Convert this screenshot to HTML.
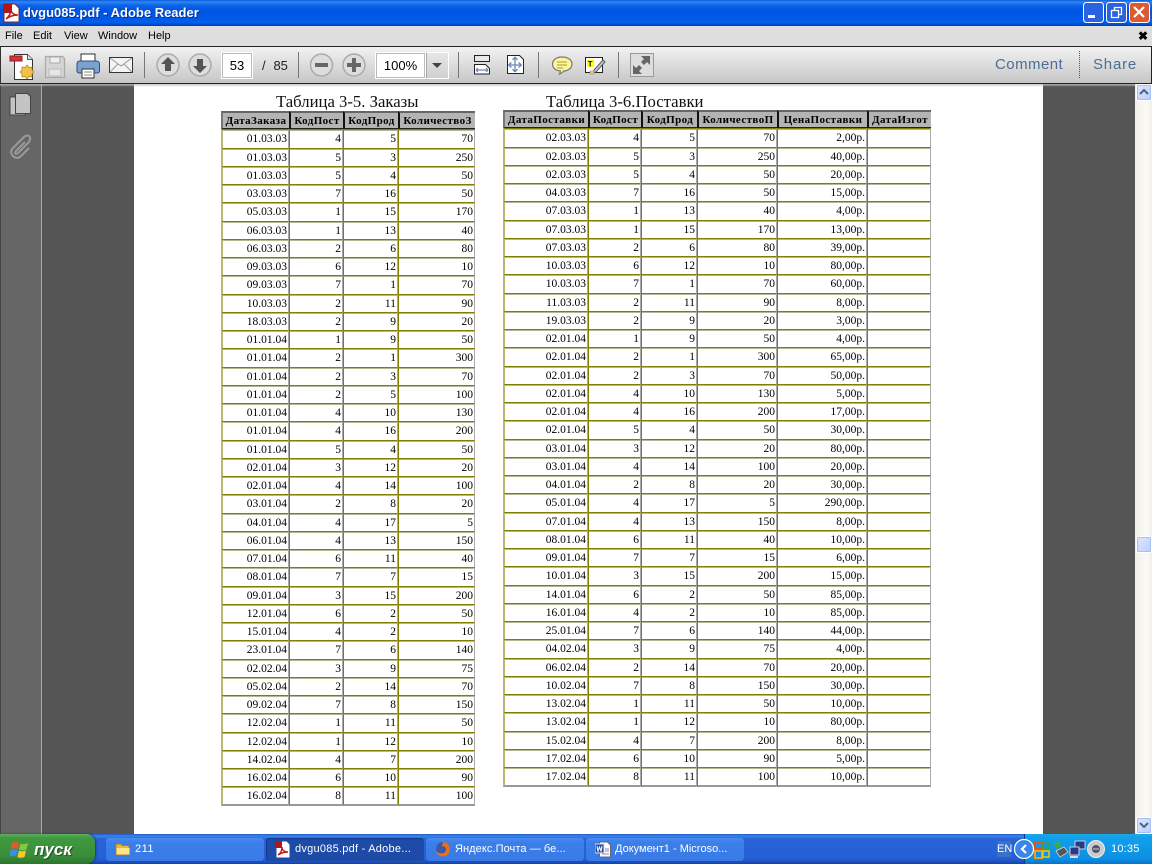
<!DOCTYPE html>
<html><head><meta charset="utf-8"><style>
html,body{margin:0;padding:0;width:1152px;height:864px;overflow:hidden;background:#555;font-family:"Liberation Sans","Noto Sans CJK SC",sans-serif}
.a{position:absolute}
#title{left:0;top:0;width:1152px;height:26px;background:linear-gradient(#0a5ce0 0,#2f86f0 2px,#0f66e8 5px,#0055e2 10px,#0058e6 18px,#0061ee 22px,#0048c8 25px,#0038a8 26px)}
#tt{left:23px;top:5px;color:#fff;font:bold 13px "Liberation Sans",sans-serif;letter-spacing:0;text-shadow:1px 1px 0 #0030a0;white-space:nowrap}
#menu{left:0;top:26px;width:1152px;height:20px;background:#dedede;font-size:11px;color:#000}
#menu span{position:absolute;top:3px}
#tb{left:0;top:46px;width:1150px;height:36px;background:linear-gradient(#f2f2f2,#c6c6c6);border:1px solid #222;border-left:1px solid #333;border-radius:1px}
#shade{left:0;top:84px;width:1135px;height:3px;background:linear-gradient(rgba(190,190,190,.9),rgba(190,190,190,0))}
.inp{position:absolute;background:#fff;border:1px solid #fff;box-shadow:0 0 0 1px #bbb inset;font-size:13px;color:#000}
#side{left:0;top:84px;width:41px;height:750px;background:#666;border-right:1px solid #aaa;box-shadow:inset 1px 0 0 #444}
#page{left:134px;top:84px;width:909px;height:750px;background:#fff}
#sb{left:1135px;top:84px;width:17px;height:750px;background:linear-gradient(90deg,#f2f0e8,#fbfaf6 70%,#f0efe8)}
.sbb{position:absolute;left:1px;width:14px;height:15px;background:linear-gradient(135deg,#e0e8ff,#b9ccfb);border:1px solid #fff;border-radius:2px;box-shadow:0 0 0 1px #a8c0f0 inset}
.cap{position:absolute;font:16.7px/16px "Liberation Serif",serif;color:#111;white-space:nowrap}
table{position:absolute;border-collapse:separate;border-spacing:0;table-layout:fixed;font:11.5px "Liberation Serif",serif;color:#000}
td,th{padding:0 1px 0 0;overflow:hidden;white-space:nowrap;text-align:right;box-sizing:border-box;line-height:12px}
td{height:18px;border-top:1px solid #808000;border-left:1px solid #808000;border-right:1px solid #aaa;box-shadow:inset 0 1px 0 #b8b890}
tr:nth-child(4n+2) td{height:19px}
th{height:18px;background:#b4b4b4;font:bold 11px "Liberation Serif",serif;letter-spacing:.4px;text-align:center;padding:0;border-top:2px solid #666;border-left:2px solid #111;border-bottom:1px solid #222;color:#000}
tr:last-child td{height:20px;border-bottom:2px solid #999}
td:first-child{border-left:2px solid #b8b870}
th:first-child{border-left:2px solid #777}
#task{left:0;top:834px;width:1152px;height:30px;background:linear-gradient(#1f5cc8 0,#3c82ec 2px,#2a63d6 5px,#2560d8 24px,#1c4fc0 28px,#16409f 30px)}
.tbtn{position:absolute;top:838px;height:23px;width:158px;background:linear-gradient(#4a8cf0,#3b7fe8 4px,#3a7ae6);border-radius:3px;color:#fff;font-size:11px;line-height:23px;white-space:nowrap;box-shadow:0 1px 0 #1d4fb8}
.act{background:#1e4aa8;box-shadow:inset 1px 1px 1px #153a86}
#start{left:0;top:834px;width:95px;height:30px;background:linear-gradient(#5fae5f,#3f9a3f 4px,#3a8d3a 22px,#2d742d);border-radius:0 9px 9px 0;box-shadow:1px 0 2px #163a78}
#st{left:34px;top:840px;color:#fff;font:italic bold 17px "Liberation Sans",sans-serif;text-shadow:1px 1px 1px #204a20}
#tray{left:1024px;top:834px;width:128px;height:30px;background:linear-gradient(#1aa8e8 0,#12a0ea 3px,#0c8fe4 25px,#0a72c8);border-left:1px solid #083a8a}
</style></head><body>
<div class="a" id="title"></div>
<svg class="a" style="left:2px;top:3px" width="20" height="20" viewBox="0 0 20 20"><path d="M2 1h11l4 4v14H2z" fill="#fff" stroke="#8a2020"/><rect x="1" y="1" width="9" height="9" fill="#b01818"/><path d="M4 16c3-2 5-6 5-10 0 4 3 6 7 6-4 0-8 1-12 4z" fill="none" stroke="#c01818" stroke-width="1.6"/></svg>
<div class="a" id="tt">dvgu085.pdf - Adobe Reader</div>
<svg class="a" style="left:1083px;top:2px" width="69" height="22" viewBox="0 0 69 22">
<rect x="0.5" y="0.5" width="20" height="20" rx="3" fill="#2a62e0" stroke="#fff"/><rect x="5" y="13" width="7" height="3" fill="#fff"/>
<rect x="23.5" y="0.5" width="20" height="20" rx="3" fill="#2a62e0" stroke="#fff"/><path d="M28.5 8.5h7v7h-7zM31.5 8V5.5h7v7H36" fill="none" stroke="#fff" stroke-width="1.3"/>
<rect x="46.5" y="0.5" width="20" height="20" rx="3" fill="#dc5a30" stroke="#fff"/><path d="M51 5l10 10M61 5L51 15" stroke="#fff" stroke-width="2.2"/></svg>
<div class="a" id="menu"><span style="left:5px;top:3.500px">File</span><span style="left:33px;top:3.500px">Edit</span><span style="left:64px;top:3.500px">View</span><span style="left:98px;top:3.500px">Window</span><span style="left:148px;top:3.500px">Help</span><span style="left:1138px;top:3px;font-weight:bold;font-size:12px">✖</span></div>
<div class="a" id="tb"></div>
<svg class="a" style="left:0;top:46px" width="680" height="38" viewBox="0 46 680 38">
<path d="M14.5 54.5h13l5 5v20h-18z" fill="#fff" stroke="#333"/><path d="M27.5 54.5v5h5" fill="#ddd" stroke="#555"/><rect x="10" y="56" width="12" height="5" fill="#d8303a" stroke="#8a2020"/><path d="M27 65l2 2.5 3-.5 0 3 2 2-2 2 0 3-3-.5-2 2.500-2-2.500-3 .5 0-3-2-2 2-2 0-3 3 .5z" fill="#f0c24a" stroke="#a88020" stroke-width=".7"/>
<path d="M45.500 56.500h17l2 2v19h-19z" fill="#d6d6d6" stroke="#aaa" stroke-width="1.3"/><rect x="50" y="57" width="10" height="6" fill="#eee" stroke="#aaa"/><rect x="49" y="69" width="12" height="7" fill="#e6e6e6" stroke="#bbb"/>
<rect x="81" y="54" width="14" height="8" fill="#fff" stroke="#333"/><path d="M80 61h16c3 0 3.500 2 3.500 3v7c0 1-1 2-3 2H80c-2 0-3-1-3-2v-7c0-2 1-3 3-3z" fill="#7ba3cf" stroke="#2d4f78"/><rect x="82" y="69" width="12" height="9" fill="#fff" stroke="#333"/><path d="M84 72h8M84 75h8" stroke="#888"/>
<rect x="109.500" y="57.500" width="23" height="15" fill="#f4f4f4" stroke="#333"/><path d="M110 58l11 8 11-8M110 72l8-8M132 72l-8-8" fill="none" stroke="#999"/>
<rect x="144" y="52" width="1" height="26" fill="#777"/>
<g><circle cx="168" cy="65" r="11" fill="#ddd" stroke="#aaa" stroke-width="1.500"/><path d="M168 57l7 7h-4v7h-6v-7h-4z" fill="#555"/></g>
<g><circle cx="200" cy="65" r="11" fill="#ddd" stroke="#aaa" stroke-width="1.500"/><path d="M200 73l-7-7h4v-7h6v7h4z" fill="#555"/></g>
<rect x="298" y="52" width="1" height="26" fill="#777"/>
<g><circle cx="321.500" cy="65" r="11" fill="#ddd" stroke="#aaa" stroke-width="1.500"/><rect x="315" y="63" width="13" height="4" fill="#666"/></g>
<g><circle cx="354" cy="65" r="11" fill="#ddd" stroke="#aaa" stroke-width="1.500"/><path d="M352 58h4v5h5v4h-5v5h-4v-5h-5v-4h5z" fill="#666"/></g>
<rect x="458" y="52" width="1" height="26" fill="#777"/>
<path d="M474.500 55.500h15v6h-15z" fill="#e8e8e8" stroke="#222"/><path d="M474.500 64.500h11l4 4v5.500h-15z" fill="#fff" stroke="#222"/><path d="M476 70h12M476 70l2-2M476 70l2 2M488 70l-2-2M488 70l-2 2" stroke="#6a84b8" stroke-width="1.200" fill="none"/>
<path d="M507.500 55.500h12l4 4v14h-16z" fill="#fff" stroke="#222"/><path d="M515 57v15M508.500 65h13M515 57l-2.500 3M515 57l2.500 3M515 72l-2.500-3M515 72l2.500-3M508.500 65l3-2.500M508.500 65l3 2.500M521.500 65l-3-2.500M521.500 65l-3 2.500" stroke="#6a84b8" stroke-width="1.300" fill="none"/>
<rect x="538" y="52" width="1" height="26" fill="#777"/>
<path d="M562 57c6 0 10 3 10 7 0 4-4 7-8.500 7-1 2-2.500 2.500-4 3 .5-1 1-2 .8-3.200C556 71 552.500 68 552.500 64c0-4 4-7 9.500-7z" fill="#fbf59c" stroke="#777" stroke-width="1.200"/><path d="M557 62h10M557 65h10M557 68h6" stroke="#a89a40"/>
<rect x="585.500" y="57.500" width="17" height="15" fill="#fff" stroke="#222"/><rect x="587" y="60" width="7" height="7" fill="#ff0"/><text x="587.800" y="66.500" font-family="Liberation Mono" font-weight="bold" font-size="8" fill="#111">T</text><path d="M605 62l-9 10-3 1 1-3 9-10z" fill="#c8c8c8" stroke="#555"/><rect x="590" y="71" width="4" height="3" fill="#e8d050" stroke="#888" stroke-width=".5"/>
<rect x="618" y="52" width="1" height="26" fill="#777"/>
<rect x="630.500" y="53.500" width="23" height="23" fill="#ddd" stroke="#999"/><path d="M650 56l0 9-3-3-3 3-3-3 3-3-3-3zM633 74l0-9 3 3 3-3 3 3-3 3 3 3z" fill="#666"/>
</svg>
<div class="inp" style="left:221px;top:52px;width:30px;height:25px;line-height:25px;text-align:center">53</div>
<div class="a" style="left:262px;top:58px;font-size:13px;color:#222;word-spacing:-1px">/&nbsp;&nbsp; 85</div>
<div class="inp" style="left:375px;top:52px;width:49px;height:25px;line-height:25px;text-align:center">100%</div>
<div class="a" style="left:426px;top:52px;width:21px;height:25px;background:linear-gradient(#e6e6e6,#d0d0d0);border:1px solid #fff;border-left:1px solid #aaa"></div>
<div class="a" style="left:432px;top:63px;border:5px solid transparent;border-top:5px solid #444;border-bottom:0"></div>
<div class="a" style="left:995px;top:56px;font-size:15px;letter-spacing:.45px;color:#4f6c94">Comment</div>
<div class="a" style="left:1079px;top:51px;height:27px;border-left:1px dotted #555"></div>
<div class="a" style="left:1093px;top:56px;font-size:15px;letter-spacing:.8px;color:#4f6c94">Share</div>
<div class="a" id="side"></div>
<svg class="a" style="left:7px;top:92px" width="28" height="72" viewBox="0 0 28 72">
<rect x="3" y="5" width="15" height="18" fill="#c4c4c4" stroke="#444"/><path d="M8.500 1.500h12l3 3v17h-15z" fill="#c4c4c4" stroke="#444"/>
<path d="M6 64c-3-3-2-6 0-8l11-11c3-3 7-1 6 2 0 2-1 3-2 4l-10 10c-2 2-4 0-2-2l9-9M6 64c3 3 6 2 8 0l8-8" fill="none" stroke="#9a9a9a" stroke-width="2"/></svg>
<div class="a" id="page"></div>
<div class="cap" style="left:276px;top:94px">Таблица 3-5. Заказы</div>
<div class="cap" style="left:546px;top:94px">Таблица 3-6.Поставки</div>
<table style="left:221px;top:111px;width:254px"><colgroup><col style="width:68px"><col style="width:54px"><col style="width:55px"><col style="width:77px"></colgroup>
<tr><th>ДатаЗаказа</th><th>КодПост</th><th>КодПрод</th><th>КоличествоЗ</th></tr>
<tr><td>01.03.03</td><td>4</td><td>5</td><td>70</td></tr>
<tr><td>01.03.03</td><td>5</td><td>3</td><td>250</td></tr>
<tr><td>01.03.03</td><td>5</td><td>4</td><td>50</td></tr>
<tr><td>03.03.03</td><td>7</td><td>16</td><td>50</td></tr>
<tr><td>05.03.03</td><td>1</td><td>15</td><td>170</td></tr>
<tr><td>06.03.03</td><td>1</td><td>13</td><td>40</td></tr>
<tr><td>06.03.03</td><td>2</td><td>6</td><td>80</td></tr>
<tr><td>09.03.03</td><td>6</td><td>12</td><td>10</td></tr>
<tr><td>09.03.03</td><td>7</td><td>1</td><td>70</td></tr>
<tr><td>10.03.03</td><td>2</td><td>11</td><td>90</td></tr>
<tr><td>18.03.03</td><td>2</td><td>9</td><td>20</td></tr>
<tr><td>01.01.04</td><td>1</td><td>9</td><td>50</td></tr>
<tr><td>01.01.04</td><td>2</td><td>1</td><td>300</td></tr>
<tr><td>01.01.04</td><td>2</td><td>3</td><td>70</td></tr>
<tr><td>01.01.04</td><td>2</td><td>5</td><td>100</td></tr>
<tr><td>01.01.04</td><td>4</td><td>10</td><td>130</td></tr>
<tr><td>01.01.04</td><td>4</td><td>16</td><td>200</td></tr>
<tr><td>01.01.04</td><td>5</td><td>4</td><td>50</td></tr>
<tr><td>02.01.04</td><td>3</td><td>12</td><td>20</td></tr>
<tr><td>02.01.04</td><td>4</td><td>14</td><td>100</td></tr>
<tr><td>03.01.04</td><td>2</td><td>8</td><td>20</td></tr>
<tr><td>04.01.04</td><td>4</td><td>17</td><td>5</td></tr>
<tr><td>06.01.04</td><td>4</td><td>13</td><td>150</td></tr>
<tr><td>07.01.04</td><td>6</td><td>11</td><td>40</td></tr>
<tr><td>08.01.04</td><td>7</td><td>7</td><td>15</td></tr>
<tr><td>09.01.04</td><td>3</td><td>15</td><td>200</td></tr>
<tr><td>12.01.04</td><td>6</td><td>2</td><td>50</td></tr>
<tr><td>15.01.04</td><td>4</td><td>2</td><td>10</td></tr>
<tr><td>23.01.04</td><td>7</td><td>6</td><td>140</td></tr>
<tr><td>02.02.04</td><td>3</td><td>9</td><td>75</td></tr>
<tr><td>05.02.04</td><td>2</td><td>14</td><td>70</td></tr>
<tr><td>09.02.04</td><td>7</td><td>8</td><td>150</td></tr>
<tr><td>12.02.04</td><td>1</td><td>11</td><td>50</td></tr>
<tr><td>12.02.04</td><td>1</td><td>12</td><td>10</td></tr>
<tr><td>14.02.04</td><td>4</td><td>7</td><td>200</td></tr>
<tr><td>16.02.04</td><td>6</td><td>10</td><td>90</td></tr>
<tr><td>16.02.04</td><td>8</td><td>11</td><td>100</td></tr>
</table>
<table style="left:503px;top:110px;width:428px"><colgroup><col style="width:85px"><col style="width:53px"><col style="width:56px"><col style="width:80px"><col style="width:90px"><col style="width:64px"></colgroup>
<tr><th>ДатаПоставки</th><th>КодПост</th><th>КодПрод</th><th>КоличествоП</th><th>ЦенаПоставки</th><th>ДатаИзгот</th></tr>
<tr><td>02.03.03</td><td>4</td><td>5</td><td>70</td><td>2,00р.</td><td></td></tr>
<tr><td>02.03.03</td><td>5</td><td>3</td><td>250</td><td>40,00р.</td><td></td></tr>
<tr><td>02.03.03</td><td>5</td><td>4</td><td>50</td><td>20,00р.</td><td></td></tr>
<tr><td>04.03.03</td><td>7</td><td>16</td><td>50</td><td>15,00р.</td><td></td></tr>
<tr><td>07.03.03</td><td>1</td><td>13</td><td>40</td><td>4,00р.</td><td></td></tr>
<tr><td>07.03.03</td><td>1</td><td>15</td><td>170</td><td>13,00р.</td><td></td></tr>
<tr><td>07.03.03</td><td>2</td><td>6</td><td>80</td><td>39,00р.</td><td></td></tr>
<tr><td>10.03.03</td><td>6</td><td>12</td><td>10</td><td>80,00р.</td><td></td></tr>
<tr><td>10.03.03</td><td>7</td><td>1</td><td>70</td><td>60,00р.</td><td></td></tr>
<tr><td>11.03.03</td><td>2</td><td>11</td><td>90</td><td>8,00р.</td><td></td></tr>
<tr><td>19.03.03</td><td>2</td><td>9</td><td>20</td><td>3,00р.</td><td></td></tr>
<tr><td>02.01.04</td><td>1</td><td>9</td><td>50</td><td>4,00р.</td><td></td></tr>
<tr><td>02.01.04</td><td>2</td><td>1</td><td>300</td><td>65,00р.</td><td></td></tr>
<tr><td>02.01.04</td><td>2</td><td>3</td><td>70</td><td>50,00р.</td><td></td></tr>
<tr><td>02.01.04</td><td>4</td><td>10</td><td>130</td><td>5,00р.</td><td></td></tr>
<tr><td>02.01.04</td><td>4</td><td>16</td><td>200</td><td>17,00р.</td><td></td></tr>
<tr><td>02.01.04</td><td>5</td><td>4</td><td>50</td><td>30,00р.</td><td></td></tr>
<tr><td>03.01.04</td><td>3</td><td>12</td><td>20</td><td>80,00р.</td><td></td></tr>
<tr><td>03.01.04</td><td>4</td><td>14</td><td>100</td><td>20,00р.</td><td></td></tr>
<tr><td>04.01.04</td><td>2</td><td>8</td><td>20</td><td>30,00р.</td><td></td></tr>
<tr><td>05.01.04</td><td>4</td><td>17</td><td>5</td><td>290,00р.</td><td></td></tr>
<tr><td>07.01.04</td><td>4</td><td>13</td><td>150</td><td>8,00р.</td><td></td></tr>
<tr><td>08.01.04</td><td>6</td><td>11</td><td>40</td><td>10,00р.</td><td></td></tr>
<tr><td>09.01.04</td><td>7</td><td>7</td><td>15</td><td>6,00р.</td><td></td></tr>
<tr><td>10.01.04</td><td>3</td><td>15</td><td>200</td><td>15,00р.</td><td></td></tr>
<tr><td>14.01.04</td><td>6</td><td>2</td><td>50</td><td>85,00р.</td><td></td></tr>
<tr><td>16.01.04</td><td>4</td><td>2</td><td>10</td><td>85,00р.</td><td></td></tr>
<tr><td>25.01.04</td><td>7</td><td>6</td><td>140</td><td>44,00р.</td><td></td></tr>
<tr><td>04.02.04</td><td>3</td><td>9</td><td>75</td><td>4,00р.</td><td></td></tr>
<tr><td>06.02.04</td><td>2</td><td>14</td><td>70</td><td>20,00р.</td><td></td></tr>
<tr><td>10.02.04</td><td>7</td><td>8</td><td>150</td><td>30,00р.</td><td></td></tr>
<tr><td>13.02.04</td><td>1</td><td>11</td><td>50</td><td>10,00р.</td><td></td></tr>
<tr><td>13.02.04</td><td>1</td><td>12</td><td>10</td><td>80,00р.</td><td></td></tr>
<tr><td>15.02.04</td><td>4</td><td>7</td><td>200</td><td>8,00р.</td><td></td></tr>
<tr><td>17.02.04</td><td>6</td><td>10</td><td>90</td><td>5,00р.</td><td></td></tr>
<tr><td>17.02.04</td><td>8</td><td>11</td><td>100</td><td>10,00р.</td><td></td></tr>
</table>
<div class="a" id="shade"></div>
<div class="a" id="sb">
<div class="sbb" style="top:0"><svg width="14" height="15"><path d="M3 9l4-4 4 4" fill="none" stroke="#4d6185" stroke-width="2"/></svg></div>
<div class="sbb" style="top:452px"></div>
<div class="sbb" style="top:733px"><svg width="14" height="15"><path d="M3 5l4 4 4-4" fill="none" stroke="#4d6185" stroke-width="2"/></svg></div>
</div>
<div class="a" id="task"></div>
<div class="a" id="start"></div>
<svg class="a" style="left:10px;top:840px" width="20" height="19" viewBox="0 0 20 19"><path d="M2 3c3-1.500 5-1 7 0l-1.500 6c-2-1-4-1-7 0z" fill="#e8562a"/><path d="M10.500 3.500c2 1 4.500 1 7.500-.5l-1.500 6.500c-3 1-5 1-7.500 0z" fill="#8cc63f"/><path d="M0.500 10c3-1 5-1 7 0L6 16.500c-2-1-4-1-7 0z" fill="#3a8ee8"/><path d="M9 10.500c2 1 4 1 7 0l-1.500 6.500c-3 1-5 1-7 0z" fill="#f8c82c"/></svg>
<div class="a" id="st">пуск</div>
<div class="tbtn" style="left:106px;letter-spacing:.45px"><svg class="a" style="left:9px;top:4px" width="16" height="14" viewBox="0 0 16 14"><path d="M1 2h5l1 1.500h7v9.500H1z" fill="#e8b830" stroke="#a87a18" stroke-width=".7"/><path d="M1.500 6h13v6.500h-13z" fill="#fce48a"/></svg><span style="position:absolute;left:29px">211</span></div>
<div class="tbtn act" style="left:266px;letter-spacing:.25px"><svg class="a" style="left:9px;top:3px" width="16" height="17" viewBox="0 0 16 17"><path d="M1.500.5h10l3 3v13h-13z" fill="#fff"/><rect x="0" y="0" width="7" height="7" fill="#b01818"/><path d="M3 14c3-2 4-5 4-8 0 3 2 5 6 5-4 0-7 1-10 3z" fill="none" stroke="#c01818" stroke-width="1.400"/></svg><span style="position:absolute;left:29px">dvgu085.pdf - Adobe...</span></div>
<div class="tbtn" style="left:426px;letter-spacing:.08px"><svg class="a" style="left:9px;top:3px" width="16" height="16" viewBox="0 0 16 16"><circle cx="8" cy="8" r="7" fill="#3a5aa8"/><path d="M8 1c4 0 7 3 7 7s-3 7.500-7 7.500S1.500 13 1 9c1 2 3 3.500 5.500 3.500S11 11 11 8.500 9 5 7 5.500C7 3.500 8 2 8 1z" fill="#e8701c"/></svg><span style="position:absolute;left:29px">Яндекс.Почта — бе...</span></div>
<div class="tbtn" style="left:586px;letter-spacing:0"><svg class="a" style="left:9px;top:3px" width="16" height="17" viewBox="0 0 16 17"><path d="M4.500 1h8l3 3v12h-11z" fill="#fff" stroke="#667"/><rect x="0" y="3" width="9" height="9" fill="#2a4aa8" stroke="#cde"/><path d="M2 5l1 5 1.500-4 1.500 4 1-5" fill="none" stroke="#fff"/><path d="M10 8h4M10 10h4M7 13h7" stroke="#88a"/></svg><span style="position:absolute;left:29px">Документ1 - Microso...</span></div>
<div class="a" style="left:997px;top:841px;height:16px;background:#3a70c8;color:#fff;font-size:11px;line-height:16px;text-align:center;width:14px">EN</div>
<div class="a" id="tray"></div>
<svg class="a" style="left:1014px;top:838px" width="96" height="24" viewBox="0 0 96 24">
<circle cx="10" cy="11" r="9.500" fill="#3a86e8" stroke="#fff" stroke-width="1.200"/><path d="M12 7l-4 4 4 4" fill="none" stroke="#fff" stroke-width="2.200"/>
<rect x="21" y="4" width="7" height="7" fill="none" stroke="#e8501c" stroke-width="2"/><rect x="29" y="5" width="6" height="6" fill="none" stroke="#3aa83a" stroke-width="1.500"/><rect x="21" y="13" width="7" height="7" fill="none" stroke="#f0a018" stroke-width="2"/><rect x="29" y="13" width="6" height="6" fill="none" stroke="#f0c818" stroke-width="1.500"/>
<path d="M40 6l5-3 2 6h-4l1 5z" fill="#3eb03e"/><path d="M42 13l8-4 4 5-8 5z" fill="#555" stroke="#ddd" stroke-width=".7"/>
<rect x="61" y="3" width="10" height="8" fill="#2a3a80" stroke="#ccd"/><rect x="56" y="9" width="9" height="8" fill="#2a3a80" stroke="#ccd"/><path d="M56 19h8" stroke="#ddd" stroke-width="2"/>
<circle cx="82" cy="11" r="8.500" fill="#c8ccd0" stroke="#eee"/><circle cx="82" cy="11" r="4" fill="#556"/><path d="M79 11h6" stroke="#ccd"/></svg>
<div class="a" style="left:1111px;top:843px;color:#fff;font-size:11px;letter-spacing:.2px">10:35</div>
</body></html>
